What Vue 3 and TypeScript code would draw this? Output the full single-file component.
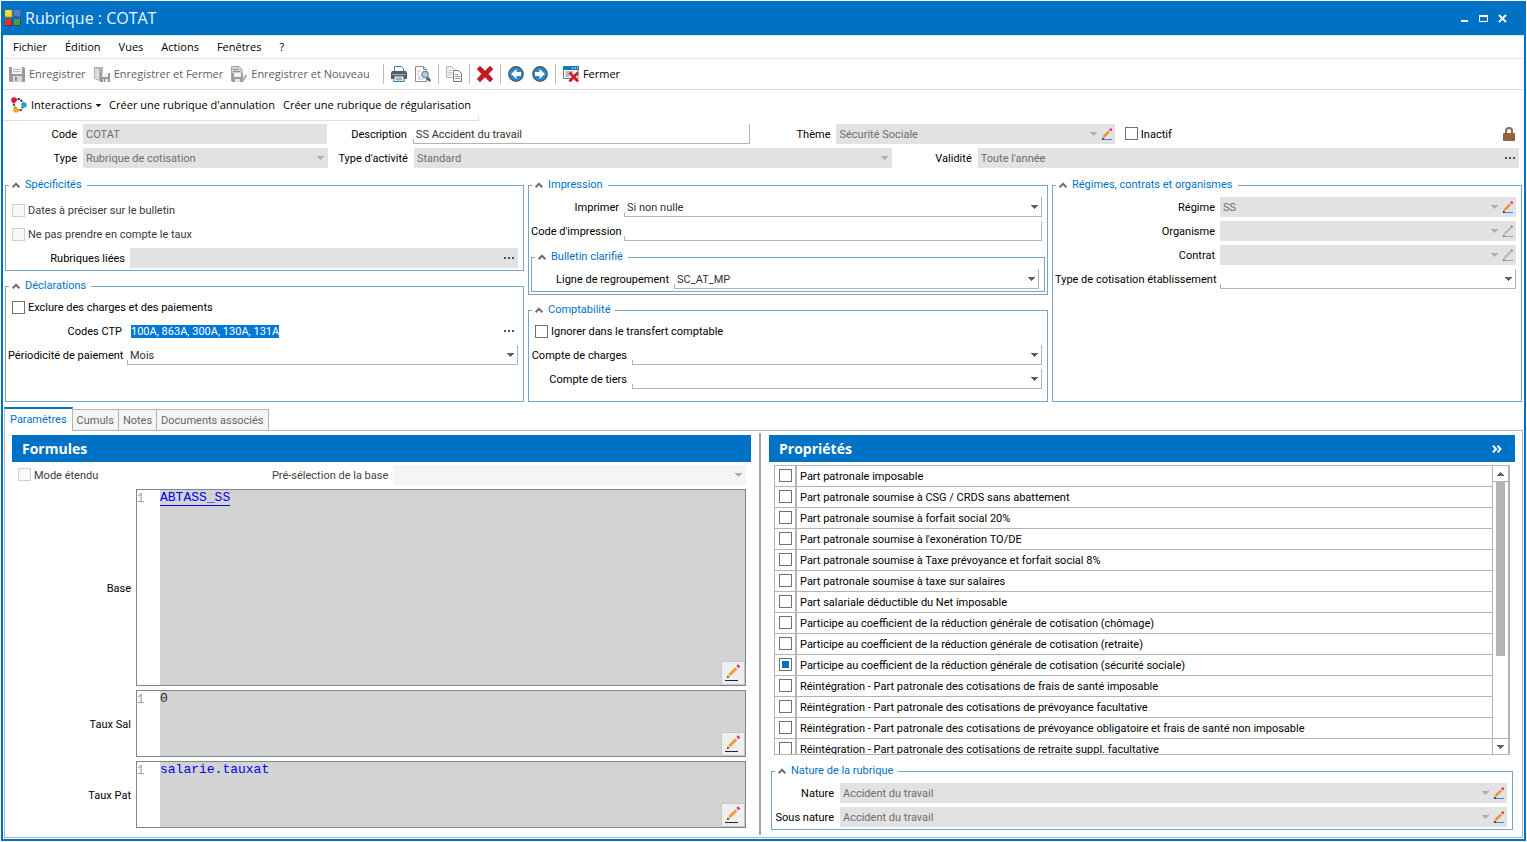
<script setup lang="ts">
import { onMounted, ref } from 'vue'

interface Property {
  label: string
  partial?: boolean
}

interface Formula {
  id: string
  label: string
  code: string
  kind: 'link' | 'number' | 'expression'
}

const menus: string[] = ['Fichier', 'Édition', 'Vues', 'Actions', 'Fenêtres', '?']
const tabs: string[] = ['Paramètres', 'Cumuls', 'Notes', 'Documents associés']
const activeTab = ref('Paramètres')

const formulas = ref<Formula[]>([
  { id: 'base', label: 'Base', code: 'ABTASS_SS', kind: 'link' },
  { id: 'taux-sal', label: 'Taux Sal', code: '0', kind: 'number' },
  { id: 'taux-pat', label: 'Taux Pat', code: 'salarie.tauxat', kind: 'expression' }
])

const properties: Property[] = [
  { label: 'Part patronale imposable' },
  { label: 'Part patronale soumise à CSG / CRDS sans abattement' },
  { label: 'Part patronale soumise à forfait social 20%' },
  { label: "Part patronale soumise à l'exonération TO/DE" },
  { label: 'Part patronale soumise à Taxe prévoyance et forfait social 8%' },
  { label: 'Part patronale soumise à taxe sur salaires' },
  { label: 'Part salariale déductible du Net imposable' },
  { label: 'Participe au coefficient de la réduction générale de cotisation (chômage)' },
  { label: 'Participe au coefficient de la réduction générale de cotisation (retraite)' },
  { label: 'Participe au coefficient de la réduction générale de cotisation (sécurité sociale)', partial: true },
  { label: 'Réintégration - Part patronale des cotisations de frais de santé imposable' },
  { label: 'Réintégration - Part patronale des cotisations de prévoyance facultative' },
  { label: 'Réintégration - Part patronale des cotisations de prévoyance obligatoire et frais de santé non imposable' },
  { label: 'Réintégration - Part patronale des cotisations de retraite suppl. facultative' }
]

const description = ref('SS Accident du travail')
const codesCtp = ref('100A, 863A, 300A, 130A, 131A')
const codesInput = ref<HTMLInputElement | null>(null)
const list = ref<HTMLElement | null>(null)

function scrollList(step: number): void {
  list.value?.scrollBy({ top: step })
}

onMounted(() => {
  codesInput.value?.focus()
  codesInput.value?.select()
})
</script>

<template>
  <svg class="sprite" aria-hidden="true">
    <symbol id="i-app" viewBox="0 0 16 16">
      <rect x="0" y="0" width="7" height="7" fill="#f4dc2c" /><path d="M0 7h7V0" fill="none" stroke="#b99a10" />
      <rect x="9" y="0" width="7" height="7" fill="#4f80c8" /><path d="M9 7h7V0" fill="none" stroke="#284e8c" />
      <rect x="0" y="9" width="7" height="7" fill="#e2371f" /><path d="M0 15.500h7V9" fill="none" stroke="#8e1c10" />
      <rect x="9" y="9" width="7" height="7" fill="#4c9a51" /><path d="M9 15.500h6.500V9" fill="none" stroke="#1d5f2a" />
    </symbol>
    <symbol id="i-save" viewBox="0 0 16 16">
      <path d="M0 1h15l1 1v14H1l-1-1z" fill="#9b9b9b" /><rect x="3" y="1" width="10" height="7" fill="#f2f2f2" />
      <path d="M4 3.500h8M4 5.500h8" stroke="#c4c4c4" /><rect x="4" y="10" width="9" height="6" fill="#d9d9d9" />
      <rect x="6" y="11" width="2" height="4" fill="#8a8a8a" />
    </symbol>
    <symbol id="i-saveclose" viewBox="0 0 16 16">
      <path d="M0 1h9v12H0z" fill="#b4b4b4" /><path d="M.500 1.500l5 1.500v11.500l-5-2z" fill="#dcdcdc" stroke="#b2b2b2" />
      <rect x="6" y="7" width="10" height="9" fill="#9b9b9b" /><rect x="8" y="7" width="6" height="4" fill="#f2f2f2" />
      <rect x="9" y="13" width="5" height="3" fill="#e4e4e4" /><rect x="10" y="13" width="1" height="3" fill="#8a8a8a" />
    </symbol>
    <symbol id="i-savenew" viewBox="0 0 16 16">
      <path d="M.500.500H8l3 3V15H.500z" fill="#cfcfcf" stroke="#a4a4a4" /><path d="M2 3.500h5M2 5.500h7" stroke="#929292" />
      <rect x="1" y="7" width="11" height="9" fill="#9b9b9b" /><rect x="3" y="7" width="7" height="4" fill="#f2f2f2" />
      <rect x="4" y="13" width="5" height="3" fill="#e4e4e4" /><path d="M15.500 9l-3.500 5-1 2" stroke="#a8a8a8" stroke-width="2" fill="none" />
    </symbol>
    <symbol id="i-print" viewBox="0 0 16 16">
      <path d="M3.500 5V.500h7l2 2V5" fill="#fff" stroke="#2f7dbd" /><path d="M1 5h14l1 2v6H0V7z" fill="#5b5b5b" />
      <path d="M1 8.500h14" stroke="#a9a9a9" /><path d="M3.500 10h9l1 5.500h-11z" fill="#fff" stroke="#2f7dbd" />
      <path d="M5 12h6M4.500 13.800h7" stroke="#7a7a7a" />
    </symbol>
    <symbol id="i-preview" viewBox="0 0 16 16">
      <path d="M.500.500h8l3 3v12H.500z" fill="#fff" stroke="#8c8c8c" /><path d="M8.500.500v3h3" fill="none" stroke="#8c8c8c" />
      <path d="M2.500 5h3M2.500 7h2M2.500 9h2M2.500 11h3M2.500 13h6" stroke="#bdbdbd" />
      <circle cx="10" cy="8.500" r="3.200" fill="#a9cfe6" stroke="#7b868d" stroke-width="1.200" />
      <path d="M12 11.500l3.200 3.500" stroke="#40698a" stroke-width="2.600" />
    </symbol>
    <symbol id="i-copy" viewBox="0 0 16 16">
      <path d="M.500.500h5l3 3v8h-8z" fill="#f4f4f4" stroke="#b5b5b5" /><path d="M2 4.500h4M2 6.500h4M2 8.500h4" stroke="#c6c6c6" />
      <path d="M7.500 4.500h5l3 3v8h-8z" fill="#fff" stroke="#757575" /><path d="M9 8.500h3M9 10.500h5M9 12.500h5" stroke="#999" />
    </symbol>
    <symbol id="i-delete" viewBox="0 0 16 16">
      <path d="M3 0l5 5 5-5 3 3-4.500 5L16 13l-3 3-5-5-5 5-3-3 4.500-5L0 3z" fill="#d01420" stroke="#7c5a5a" stroke-width=".600" />
    </symbol>
    <symbol id="i-prev" viewBox="0 0 16 16">
      <circle cx="8" cy="8" r="7.200" fill="#2b86cb" stroke="#4f5d68" stroke-width="1.400" />
      <path d="M3 8l5.500-5v3H13v4H8.500v3z" fill="#fff" />
    </symbol>
    <symbol id="i-next" viewBox="0 0 16 16">
      <circle cx="8" cy="8" r="7.200" fill="#2b86cb" stroke="#4f5d68" stroke-width="1.400" />
      <path d="M13 8L7.500 3v3H3v4h4.500v3z" fill="#fff" />
    </symbol>
    <symbol id="i-close" viewBox="0 0 16 16">
      <path d="M.500 3h14.500v9.500H.500z" fill="#fff" stroke="#777" /><rect x="0" y="0" width="16" height="4" fill="#1c74bb" />
      <path d="M9 2h1.500M11.500 2H13M14 2h1" stroke="#fff" /><path d="M2.500 6h8M2.500 8h5M2.500 10h4" stroke="#777" />
      <path d="M6.500 6.500l8.500 9M15 6.500l-8.500 9" stroke="#c9202c" stroke-width="2.800" />
    </symbol>
    <symbol id="i-graph" viewBox="0 0 16 16">
      <path d="M2 3l1 5 2 5M3 2.500l6-.500 4 5M5 13.500l5-.500 3-5" fill="none" stroke="#3d3d3d" stroke-width="2" stroke-dasharray="2.500 1" />
      <circle cx="3" cy="3" r="2.800" fill="#dc1440" /><circle cx="13" cy="8" r="2.800" fill="#2e9fdc" /><circle cx="5" cy="13" r="2.800" fill="#f5a81c" />
    </symbol>
    <symbol id="i-pencil" viewBox="0 0 12 12">
      <path d="M1 11.500h10" stroke="#3c8fd0" /><path d="M2.500 9l6-6" stroke="#f08c24" stroke-width="2.400" />
      <path d="M8 3.500L9.500 2" stroke="#cfd4d8" stroke-width="2.400" /><path d="M9.200 2.300L10.600.900" stroke="#d8243c" stroke-width="2.400" />
      <path d="M.800 12l.600-2.800 2.200 2z" fill="#333" />
    </symbol>
    <symbol id="i-pencil-off" viewBox="0 0 12 12">
      <path d="M1 11.500h10" stroke="#a2a2a2" /><path d="M2.500 9l6.500-6.500" stroke="#b8b8b8" stroke-width="2.200" />
      <path d="M9.200 2.300L10.600.900" stroke="#8e8e8e" stroke-width="2.200" /><path d="M.800 12l.600-2.800 2.200 2z" fill="#888" />
    </symbol>
    <symbol id="i-edit" viewBox="0 0 18 18">
      <path d="M1 16.500h13" stroke="#222" /><path d="M5.500 11l7-7" stroke="#f29a35" stroke-width="3" />
      <path d="M12 4.500L13.800 2.700" stroke="#d9dde0" stroke-width="3" /><path d="M13.600 2.900L15.200 1.500" stroke="#dc2c42" stroke-width="3.200" />
      <path d="M3 14l1.200-4 2.400 2.400z" fill="#f3cf9c" /><path d="M3 14l.700-2.400 1.600 1.600z" fill="#222" />
    </symbol>
    <symbol id="i-lock" viewBox="0 0 12 14">
      <path d="M3 7V4a3 3 0 0 1 6 0v3" fill="none" stroke="#8a6a52" stroke-width="2" /><rect x="0" y="6" width="12" height="8" rx="1" fill="#96603c" />
    </symbol>
    <symbol id="i-arrow" viewBox="0 0 7 4"><path d="M0 0h7v1H6v1H5v1H4v1H3V3H2V2H1V1H0z" fill="currentColor" /></symbol>
    <symbol id="i-up" viewBox="0 0 7 4"><path d="M0 4h7V3H6V2H5V1H4V0H3v1H2v1H1v1H0z" fill="currentColor" /></symbol>
    <symbol id="i-dots" viewBox="0 0 11 2"><path d="M0 0h2v2H0zM4 0h2v2H4zM8 0h2v2H8z" fill="currentColor" /></symbol>
    <symbol id="i-chevron" viewBox="0 0 8 6"><path d="M.700 5.300L4 1.700l3.300 3.600" fill="none" stroke="#6f6f6f" stroke-width="2" /></symbol>
    <symbol id="i-double" viewBox="0 0 10 8"><path d="M1 .700L4 4 1 7.300M5.500.700L8.500 4l-3 3.300" fill="none" stroke="#fff" stroke-width="2" /></symbol>
  </svg>

  <div class="window">
    <header class="titlebar">
      <svg class="ic16"><use href="#i-app" /></svg>
      <h1>Rubrique : COTAT</h1>
      <div class="winbuttons">
        <button type="button" aria-label="Réduire"><svg width="9" height="9" viewBox="0 0 9 9"><path d="M1 7h7" stroke="#fff" stroke-width="2" /></svg></button>
        <button type="button" aria-label="Agrandir"><svg width="9" height="9" viewBox="0 0 9 9"><path d="M0 2h9" stroke="#fff" stroke-width="2" /><path d="M.500 2v5.500h8V2" fill="none" stroke="#fff" /></svg></button>
        <button type="button" aria-label="Fermer la fenêtre"><svg width="9" height="9" viewBox="0 0 9 9"><path d="M1 1l7 7M8 1L1 8" stroke="#fff" stroke-width="1.800" /></svg></button>
      </div>
    </header>

    <nav class="menubar">
      <button v-for="m in menus" :key="m" type="button">{{ m }}</button>
    </nav>

    <div class="toolbar" role="toolbar" aria-label="Outils">
      <button type="button" disabled><svg class="ic16"><use href="#i-save" /></svg>Enregistrer</button>
      <button type="button" disabled><svg class="ic16"><use href="#i-saveclose" /></svg>Enregistrer et Fermer</button>
      <button type="button" disabled><svg class="ic16"><use href="#i-savenew" /></svg>Enregistrer et Nouveau</button>
      <span class="sep first"></span>
      <button type="button" aria-label="Imprimer"><svg class="ic16"><use href="#i-print" /></svg></button>
      <button type="button" aria-label="Aperçu"><svg class="ic16"><use href="#i-preview" /></svg></button>
      <span class="sep"></span>
      <button type="button" aria-label="Copier"><svg class="ic16"><use href="#i-copy" /></svg></button>
      <span class="sep"></span>
      <button type="button" aria-label="Supprimer"><svg class="ic16"><use href="#i-delete" /></svg></button>
      <span class="sep"></span>
      <button type="button" aria-label="Précédent"><svg class="ic16"><use href="#i-prev" /></svg></button>
      <button type="button" aria-label="Suivant"><svg class="ic16"><use href="#i-next" /></svg></button>
      <span class="sep"></span>
      <button type="button"><svg class="ic16"><use href="#i-close" /></svg>Fermer</button>
    </div>

    <div class="toolbar actions" role="toolbar" aria-label="Actions sur la rubrique">
      <button type="button"><svg class="ic16"><use href="#i-graph" /></svg>Interactions<svg class="small"><use href="#i-arrow" /></svg></button>
      <button type="button">Créer une rubrique d'annulation</button>
      <button type="button">Créer une rubrique de régularisation</button>
    </div>

    <main>
      <div class="head">
        <div class="headrow">
          <label class="w66" for="code">Code</label>
          <div class="field off g244"><input id="code" value="COTAT" disabled /></div>
          <label class="w74" for="description">Description</label>
          <div class="field g338"><input id="description" v-model="description" /></div>
          <label class="w74" for="theme">Thème</label>
          <div class="field off g279">
            <select id="theme" disabled><option>Sécurité Sociale</option></select>
            <svg class="arrow"><use href="#i-arrow" /></svg>
            <button type="button" aria-label="Modifier le thème"><svg class="ic12"><use href="#i-pencil" /></svg></button>
          </div>
          <div class="check inactive"><input id="inactif" type="checkbox" /><label for="inactif">Inactif</label></div>
          <svg class="lock"><use href="#i-lock" /></svg>
        </div>
        <div class="headrow">
          <label class="w66" for="type">Type</label>
          <div class="field off g244"><select id="type" disabled><option>Rubrique de cotisation</option></select><svg class="arrow"><use href="#i-arrow" /></svg></div>
          <label class="w74" for="activite">Type d'activité</label>
          <div class="field off g479"><select id="activite" disabled><option>Standard</option></select><svg class="arrow"><use href="#i-arrow" /></svg></div>
          <label class="w74" for="validite">Validité</label>
          <div class="field off g543">
            <input id="validite" value="Toute l'année" disabled />
            <button type="button" aria-label="Choisir la validité"><svg class="dots"><use href="#i-dots" /></svg></button>
          </div>
        </div>
      </div>

      <div class="groups">
        <div class="column">
          <fieldset>
            <legend><svg class="chev"><use href="#i-chevron" /></svg>Spécificités</legend>
            <div class="rows loose">
              <div class="check off"><input id="dates" type="checkbox" disabled /><label for="dates">Dates à préciser sur le bulletin</label></div>
              <div class="check off"><input id="sanstaux" type="checkbox" disabled /><label for="sanstaux">Ne pas prendre en compte le taux</label></div>
              <div class="row">
                <label class="w117" for="liees">Rubriques liées</label>
                <div class="field off"><input id="liees" disabled /><button type="button" aria-label="Choisir les rubriques"><svg class="dots"><use href="#i-dots" /></svg></button></div>
              </div>
            </div>
          </fieldset>
          <fieldset class="grow">
            <legend><svg class="chev"><use href="#i-chevron" /></svg>Déclarations</legend>
            <div class="rows">
              <div class="check"><input id="exclure" type="checkbox" /><label for="exclure">Exclure des charges et des paiements</label></div>
              <div class="row">
                <label class="w114" for="ctp">Codes CTP</label>
                <div class="field plain"><input id="ctp" ref="codesInput" v-model="codesCtp" class="codes" /><button type="button" aria-label="Choisir les codes"><svg class="dots"><use href="#i-dots" /></svg></button></div>
              </div>
              <div class="row">
                <label class="w114" for="periodicite">Périodicité de paiement</label>
                <div class="field"><select id="periodicite"><option>Mois</option></select><svg class="arrow"><use href="#i-arrow" /></svg></div>
              </div>
            </div>
          </fieldset>
        </div>

        <div class="column">
          <fieldset>
            <legend><svg class="chev"><use href="#i-chevron" /></svg>Impression</legend>
            <div class="rows">
              <div class="row">
                <label class="w88" for="imprimer">Imprimer</label>
                <div class="field"><select id="imprimer"><option>Si non nulle</option></select><svg class="arrow"><use href="#i-arrow" /></svg></div>
              </div>
              <div class="row">
                <label class="w88" for="codeimp">Code d'impression</label>
                <div class="field"><input id="codeimp" /></div>
              </div>
            </div>
            <fieldset class="nested">
              <legend><svg class="chev"><use href="#i-chevron" /></svg>Bulletin clarifié</legend>
              <div class="rows">
                <div class="row">
                  <label class="w135" for="ligne">Ligne de regroupement</label>
                  <div class="field"><select id="ligne"><option>SC_AT_MP</option></select><svg class="arrow"><use href="#i-arrow" /></svg></div>
                </div>
              </div>
            </fieldset>
          </fieldset>
          <fieldset class="grow">
            <legend><svg class="chev"><use href="#i-chevron" /></svg>Comptabilité</legend>
            <div class="rows">
              <div class="check"><input id="ignorer" type="checkbox" /><label for="ignorer">Ignorer dans le transfert comptable</label></div>
              <div class="row">
                <label class="w96" for="charges">Compte de charges</label>
                <div class="field"><select id="charges"><option></option></select><svg class="arrow"><use href="#i-arrow" /></svg></div>
              </div>
              <div class="row">
                <label class="w96" for="tiers">Compte de tiers</label>
                <div class="field"><select id="tiers"><option></option></select><svg class="arrow"><use href="#i-arrow" /></svg></div>
              </div>
            </div>
          </fieldset>
        </div>

        <div class="column">
          <fieldset class="grow">
            <legend><svg class="chev"><use href="#i-chevron" /></svg>Régimes, contrats et organismes</legend>
            <div class="rows">
              <div class="row">
                <label class="w160" for="regime">Régime</label>
                <div class="field off"><select id="regime" disabled><option>SS</option></select><svg class="arrow"><use href="#i-arrow" /></svg><button type="button" aria-label="Modifier le régime"><svg class="ic12"><use href="#i-pencil" /></svg></button></div>
              </div>
              <div class="row">
                <label class="w160" for="organisme">Organisme</label>
                <div class="field off"><select id="organisme" disabled><option></option></select><svg class="arrow"><use href="#i-arrow" /></svg><button type="button" disabled aria-label="Modifier l'organisme"><svg class="ic12"><use href="#i-pencil-off" /></svg></button></div>
              </div>
              <div class="row">
                <label class="w160" for="contrat">Contrat</label>
                <div class="field off"><select id="contrat" disabled><option></option></select><svg class="arrow"><use href="#i-arrow" /></svg><button type="button" disabled aria-label="Modifier le contrat"><svg class="ic12"><use href="#i-pencil-off" /></svg></button></div>
              </div>
              <div class="row">
                <label class="w160" for="cotisation">Type de cotisation établissement</label>
                <div class="field"><select id="cotisation"><option></option></select><svg class="arrow"><use href="#i-arrow" /></svg></div>
              </div>
            </div>
          </fieldset>
        </div>
      </div>

      <div class="tabs" role="tablist">
        <button v-for="t in tabs" :key="t" type="button" role="tab" :aria-selected="t === activeTab" :class="{ active: t === activeTab }" @click="activeTab = t">{{ t }}</button>
      </div>

      <div class="panel" role="tabpanel">
        <section class="pane formulas">
          <h2>Formules</h2>
          <div class="moderow">
            <div class="check off"><input id="mode" type="checkbox" disabled /><label for="mode">Mode étendu</label></div>
            <div class="row">
              <label class="dim" for="preselection">Pré-sélection de la base</label>
              <div class="field faint"><select id="preselection" disabled><option></option></select><svg class="arrow"><use href="#i-arrow" /></svg></div>
            </div>
          </div>
          <div class="editors">
            <template v-for="f in formulas" :key="f.id">
              <label :for="f.id">{{ f.label }}</label>
              <div class="editor">
                <span class="gutter">1</span>
                <textarea :id="f.id" v-model="f.code" :class="f.kind" spellcheck="false" readonly></textarea>
                <button type="button" :aria-label="'Modifier ' + f.label"><svg class="ic18"><use href="#i-edit" /></svg></button>
              </div>
            </template>
          </div>
        </section>

        <div class="divider"></div>

        <section class="pane">
          <h2>Propriétés<button type="button" aria-label="Replier"><svg width="10" height="8"><use href="#i-double" /></svg></button></h2>
          <div class="listbox">
            <div ref="list" class="list">
              <table>
                <tbody>
                  <tr v-for="(p, i) in properties" :key="p.label">
                    <td class="tick"><input :id="'p' + i" type="checkbox" :indeterminate="p.partial" /></td>
                    <td><label :for="'p' + i">{{ p.label }}</label></td>
                  </tr>
                </tbody>
              </table>
            </div>
            <div class="scroll">
              <button type="button" aria-label="Défiler vers le haut" @click="scrollList(-21)"><svg class="arrow"><use href="#i-up" /></svg></button>
              <div class="track"><div class="thumb"></div></div>
              <button type="button" aria-label="Défiler vers le bas" @click="scrollList(21)"><svg class="arrow"><use href="#i-arrow" /></svg></button>
            </div>
          </div>
          <fieldset class="nature">
            <legend><svg class="chev"><use href="#i-chevron" /></svg>Nature de la rubrique</legend>
            <div class="rows">
              <div class="row">
                <label class="w60" for="nature">Nature</label>
                <div class="field off"><select id="nature" disabled><option>Accident du travail</option></select><svg class="arrow"><use href="#i-arrow" /></svg><button type="button" aria-label="Modifier la nature"><svg class="ic12"><use href="#i-pencil" /></svg></button></div>
              </div>
              <div class="row">
                <label class="w60" for="sousnature">Sous nature</label>
                <div class="field off"><select id="sousnature" disabled><option>Accident du travail</option></select><svg class="arrow"><use href="#i-arrow" /></svg><button type="button" aria-label="Modifier la sous nature"><svg class="ic12"><use href="#i-pencil" /></svg></button></div>
              </div>
            </div>
          </fieldset>
        </section>
      </div>
    </main>
  </div>
</template>

<style>
body {
  margin: 0;
  background: #fff;
}
#app {
  box-sizing: border-box;
  min-height: 100vh;
  padding: 1px;
  display: flex;
}
</style>

<style scoped>
* {
  box-sizing: border-box;
}
.sprite {
  position: absolute;
  width: 0;
  height: 0;
}
.window {
  flex: 1;
  min-width: 0;
  display: flex;
  flex-direction: column;
  border: solid #0072c6;
  border-width: 0 2px 2px;
  background: #fff;
  color: #000;
  font: 11px/16px Roboto, "Noto Sans", sans-serif;
}
button,
input,
select,
textarea {
  margin: 0;
  padding: 0;
  border: 0;
  border-radius: 0;
  background: none;
  color: inherit;
  font: inherit;
  outline: none;
}
label,
legend {
  height: 16px;
  line-height: 18px;
  white-space: nowrap;
}
svg {
  display: block;
  flex: none;
}
.ic16 { width: 16px; height: 16px; }
.ic12 { width: 12px; height: 12px; }
.ic18 { width: 18px; height: 18px; }
.arrow { width: 7px; height: 4px; color: #606060; }
.small { width: 5px; height: 3px; color: #111; }
.dots { width: 11px; height: 2px; color: #505050; }
.chev { width: 8px; height: 6px; }
.lock { width: 12px; height: 14px; }

.titlebar {
  display: flex;
  align-items: center;
  gap: 4px;
  height: 34px;
  padding: 0 12px 0 2px;
  background: #0072c6;
  color: #eaf4fc;
}
h1 {
  flex: 1;
  margin: 0;
  font: 16px/20px "Open Sans", "Noto Sans", sans-serif;
}
.winbuttons { display: flex; }
.winbuttons button {
  display: flex;
  justify-content: center;
  width: 19px;
}
.menubar {
  display: flex;
  gap: 18px;
  height: 24px;
  padding: 0 10px;
  border-top: 1px solid #dfe6ea;
  border-bottom: 1px solid #e6e6e6;
  font: 11px/22px "Open Sans", "Noto Sans", sans-serif;
}
.toolbar {
  display: flex;
  align-items: center;
  gap: 8px;
  height: 31px;
  padding: 0 6px;
  border-bottom: 1px solid #dcdcdc;
  font: 11px/16px "Open Sans", "Noto Sans", sans-serif;
}
.toolbar button {
  display: flex;
  align-items: center;
  gap: 4px;
  white-space: nowrap;
}
.toolbar button:disabled { color: #5f5f5f; }
.sep {
  width: 1px;
  height: 20px;
  margin: 0 -1px;
  background: #bcbcbc;
}
.sep.first { margin-left: 5px; }
.actions {
  align-self: flex-start;
  padding: 0 8px;
  background: linear-gradient(#dcdcdc, #dcdcdc) right bottom / 1px 4px no-repeat;
}

main {
  flex: 1;
  display: flex;
  flex-direction: column;
}
.head {
  display: grid;
  gap: 4px;
  padding: 3px 5px 9px 8px;
}
.headrow,
.row {
  display: flex;
  align-items: center;
  gap: 6px;
  min-width: 0;
}
.headrow > label { text-align: right; }
.w66 { width: 66px; }
.w74 { width: 74px; }
.lock { margin: 0 4px 0 auto; }
.inactive { flex: 377 1 0; }
.field {
  flex: 1 1 0;
  display: flex;
  align-items: center;
  min-width: 0;
  height: 20px;
  padding-right: 3px;
  border: solid #b4b4b4;
  border-width: 0 1px 1px 0;
  background: linear-gradient(#b4b4b4, #b4b4b4) left bottom / 1px 4px no-repeat;
  color: #333;
}
.headrow .g244 { flex: 244 1 0; }
.headrow .g279 { flex: 279 1 0; }
.headrow .g338 { flex: 338 1 0; }
.headrow .g479 { flex: 479 1 0; }
.headrow .g543 { flex: 543 1 0; }
.field input,
.field select {
  flex: 1;
  min-width: 0;
  height: 18px;
  padding: 2px 0 0 3px;
  appearance: none;
  opacity: 1;
}
.field.off input { padding-top: 0; }
.field.off,
.field.faint,
.field.plain { border: 0; }
.field.off { background: #e2e2e2; color: #6d6d6d; }
.field.faint { background: #f5f5f5; }
.field.plain { background: none; }
.off .arrow,
.faint .arrow { color: #b0b0b0; margin-right: 1px; }
.field .arrow + button { margin: 0 -1px 0 3px; }
.field input.codes {
  height: 13px;
  padding: 0 0 0 4px;
  line-height: 13px;
}
.codes::selection { background: #0078d7; color: #fff; }

.check {
  display: flex;
  align-items: center;
  gap: 3px;
  height: 20px;
  padding-left: 4px;
}
.check.off { color: #3a3a3a; }
input[type="checkbox"] {
  flex: none;
  width: 13px;
  height: 13px;
  appearance: none;
  border: 1px solid #707070;
  background: #fff;
}
.headrow input[type="checkbox"],
.moderow input[type="checkbox"],
.tick input[type="checkbox"] {
  margin-bottom: 1px;
}
input[type="checkbox"]:disabled {
  border-color: #d0d0d0;
  background: #f9f9f9;
}
input[type="checkbox"]:checked,
input[type="checkbox"]:indeterminate {
  padding: 2px;
  background: #0072c6 content-box;
}

.groups {
  display: grid;
  grid-template-columns: 519fr 520fr 470fr;
  gap: 4px;
  padding: 0 2px 5px;
}
.column {
  display: flex;
  flex-direction: column;
  gap: 7px;
  min-width: 0;
}
fieldset {
  min-width: 0;
  margin: 0;
  padding: 0 2px 2px;
  border: 1px solid #7ba3c4;
}
.grow { flex: 1 0 auto; }
.column > .grow:not(:first-child) { min-height: 124px; }
.column:nth-child(2) > .grow:not(:first-child) { min-height: 100px; }
.nested { margin-top: 8px; }
legend {
  display: flex;
  align-items: center;
  gap: 5px;
  margin-left: 1px;
  padding: 0 5px 0 3px;
  color: #0072c6;
}
.rows {
  display: grid;
  gap: 4px;
  padding: 3px 3px 0 0;
}
.rows > .row:first-child { margin-top: 1px; }
.rows.loose { padding-top: 7px; }
.row { gap: 5px; }
.row label { flex: none; text-align: right; }
.w117 { width: 117px; }
.w114 { width: 114px; }
.w88 { width: 88px; }
.w135 { width: 135px; }
.w96 { width: 96px; }
.w160 { width: 160px; }
.w60 { width: 60px; }

.tabs {
  display: flex;
  align-items: flex-end;
  height: 23px;
  padding-left: 1px;
}
.tabs button {
  height: 21px;
  padding: 1px 4px 0;
  border: 1px solid #b4b4b4;
  border-width: 1px 1px 0 0;
  background: #f5f5f5;
  color: #666;
}
.tabs .active {
  position: relative;
  height: 24px;
  margin-bottom: -1px;
  padding: 0 5px;
  border-top: 2px solid #0072c6;
  border-left-width: 1px;
  background: #fff;
  color: #0072c6;
}
.panel {
  flex: 1;
  display: grid;
  grid-template-columns: 739fr 2px 746fr;
  gap: 8px;
  margin: 0 1px 1px;
  padding: 2px 7px;
  border: 1px solid #b4b4b4;
}
.divider { background: #a5a0a0; }
.pane {
  display: flex;
  flex-direction: column;
  min-width: 0;
  padding: 2px 0 5px;
}
h2 {
  display: flex;
  align-items: center;
  justify-content: space-between;
  height: 27px;
  margin: 0 0 3px;
  padding: 0 13px 0 10px;
  background: #0072c6;
  color: #fff;
  font: bold 14px/20px "Open Sans", "Noto Sans", sans-serif;
}
.formulas { padding-bottom: 7px; }
.moderow {
  display: grid;
  grid-template-columns: 255fr 479fr;
  padding: 0 5px 4px 2px;
}
.dim { color: #444; }
.moderow .row .dim { width: 120px; }
.editors {
  flex: 1;
  display: grid;
  grid-template-columns: 119px 1fr;
  grid-template-rows: minmax(120px, 1fr) 67px 67px;
  gap: 4px 5px;
  padding-right: 5px;
}
.editors > label { align-self: center; text-align: right; }
.editor {
  position: relative;
  display: flex;
  border: 1px solid #7f868e;
}
.gutter {
  width: 23px;
  background: #fff;
  color: #9a9a9a;
  font: 12px/18px "Liberation Mono", monospace;
}
.editor textarea {
  flex: 1;
  resize: none;
  background: #d3d3d3;
  color: #0000f0;
  font: 13px/15px "Liberation Mono", monospace;
}
.editor textarea.link {
  text-decoration: underline;
  text-underline-offset: 4px;
}
.editor textarea.number { color: #222; }
.editor button {
  position: absolute;
  right: 0;
  bottom: 0;
  display: grid;
  place-items: center;
  width: 24px;
  height: 24px;
  border: 1px solid #c8c8c8;
  background: #efefef;
}

.listbox {
  flex: 1;
  display: flex;
  min-height: 200px;
  margin: 0 5px 8px;
  border: 1px solid #b4b4b4;
  border-right-width: 2px;
}
.list {
  flex: 1;
  height: 0;
  min-height: 100%;
  overflow: hidden;
}
table {
  width: 100%;
  border-spacing: 0;
}
td {
  height: 21px;
  padding: 0 0 0 3px;
  border-bottom: 1px solid #b4b4b4;
}
td label { display: block; }
.tick {
  width: 22px;
  padding-left: 4px;
  border-right: 2px solid #b4b4b4;
}
.tick input { display: block; }
.scroll {
  display: flex;
  flex-direction: column;
  width: 16px;
  border-left: 1px solid #b4b4b4;
}
.scroll button {
  display: grid;
  place-items: center;
  height: 16px;
}
.scroll button:first-child { border-bottom: 1px solid #b4b4b4; }
.scroll button:last-child { border-top: 1px solid #b4b4b4; }
.track { flex: 1; padding: 0 3px; }
.thumb { height: 68%; background: #b4b4b4; }
.nature { margin: 0 2px; }
.nature .row { gap: 6px; }
</style>
